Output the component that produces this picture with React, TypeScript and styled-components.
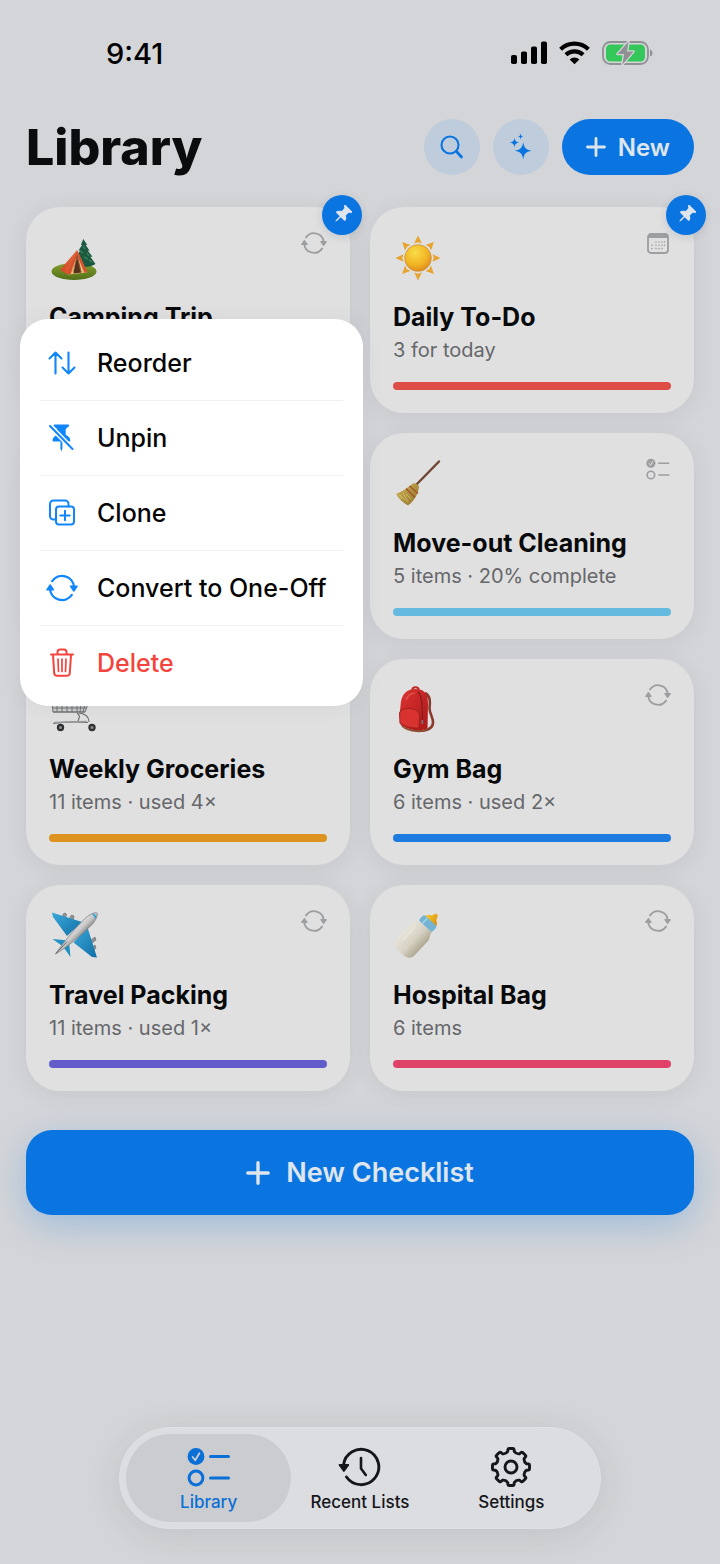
import type { ReactNode } from "react";
import styled, { createGlobalStyle } from "styled-components";

type Kind = "repeat" | "daily" | "checklist";

interface Checklist {
  title: string;
  detail?: string;
  kind: Kind;
  color: string;
  picture: ReactNode;
  pinned?: boolean;
}

/* ---------- icons ---------- */

const RepeatIcon = ({ width = 32, height = 28 }) => (
  <svg width={width} height={height} viewBox="0 0 32 28" fill="none" stroke="currentColor" strokeWidth="2.3" strokeLinecap="round" aria-hidden="true">
    <path d="M6.2 7.1A12 12 0 0 1 28 13" />
    <path d="M4 15a12 12 0 0 0 21.8 5.9" />
    <path d="M24.5 12.2h6.6l-3.3 4.8z" fill="currentColor" strokeWidth="1.5" strokeLinejoin="round" />
    <path d="M.9 15.8h6.6l-3.3-4.8z" fill="currentColor" strokeWidth="1.5" strokeLinejoin="round" />
  </svg>
);

const ChecklistIcon = ({ width = 44, height = 40, tick = "#cdced1" }) => (
  <svg width={width} height={height} viewBox="0 0 44 40" fill="none" stroke="currentColor" strokeWidth="3" strokeLinecap="round" aria-hidden="true">
    <circle cx="9" cy="9.5" r="8.4" fill="currentColor" stroke="none" />
    <path d="M5.6 10l2.6 3.2 4.2-7" stroke={tick} strokeWidth="1.8" strokeLinejoin="round" />
    <circle cx="9" cy="31" r="6.9" />
    <path d="M23.5 9.5h18M23.5 31h18" />
  </svg>
);

const CalendarIcon = () => (
  <svg width="22" height="21" viewBox="0 0 22 21" fill="none" aria-hidden="true">
    <rect x="1" y="1" width="20" height="19" rx="3" stroke="currentColor" strokeWidth="1.8" />
    <path d="M1 5V4a3 3 0 0 1 3-3h14a3 3 0 0 1 3 3v1z" fill="currentColor" />
    <path
      d="M9 9h0M12 9h0M15 9h0M17.5 9h0M5 12.3h0M9 12.3h0M12 12.3h0M15 12.3h0M17.5 12.3h0M5 15.6h0M9 15.6h0M12 15.6h0M15 15.6h0"
      stroke="currentColor"
      strokeWidth="1.6"
      strokeLinecap="round"
    />
  </svg>
);

const pinPath =
  "M5.6 .6h13.6c1 0 1.3 1 .7 1.7l-3.2 2.8v5.6c2.8 1.5 4.6 3.6 4.6 5.5 0 .9-.5 1.3-1.3 1.3h-6.6v7l-1 3-1-3v-7H4.8c-.8 0-1.3-.4-1.3-1.3 0-1.9 1.8-4 4.6-5.5V5.1L4.9 2.3C4.3 1.6 4.6 .6 5.6 .6z";

const PinIcon = () => (
  <svg width="20" height="20" viewBox="0 0 28 28" fill="currentColor" aria-hidden="true">
    <path d={pinPath} transform="rotate(45 14 14) translate(1.6 0)" />
  </svg>
);

const UnpinIcon = () => (
  <svg width="25" height="28" viewBox="0 0 25 28" fill="currentColor" aria-hidden="true">
    <path d={pinPath} />
    <path d="M1 2l22.5 23" stroke="#fff" strokeWidth="5" />
    <path d="M1 2l22.5 23" stroke="currentColor" strokeWidth="2" strokeLinecap="round" />
  </svg>
);

const ReorderIcon = () => (
  <svg width="28" height="24" viewBox="0 0 28 24" fill="none" stroke="currentColor" strokeWidth="2.1" strokeLinecap="round" strokeLinejoin="round" aria-hidden="true">
    <path d="M7.5 22.5V1.5M1.5 7.5l6-6 6 6M20.5 1.5v21M14.5 16.5l6 6 6-6" />
  </svg>
);

const CloneIcon = () => (
  <svg width="28" height="28" viewBox="0 0 28 28" fill="none" stroke="currentColor" strokeWidth="2" strokeLinecap="round" aria-hidden="true">
    <path d="M7.5 20.5h-2A3.5 3.5 0 0 1 2 17V5a3.5 3.5 0 0 1 3.5-3.5H17A3.5 3.5 0 0 1 20.5 5v2.500" />
    <rect x="8" y="7.5" width="18" height="18" rx="3" />
    <path d="M17 11.8v9.4M12.3 16.5h9.4" />
  </svg>
);

const TrashIcon = () => (
  <svg width="26" height="30" viewBox="0 0 26 30" fill="none" stroke="currentColor" strokeWidth="2" strokeLinecap="round" strokeLinejoin="round" aria-hidden="true">
    <path d="M2 6.5h22M8.5 6.5V4A2.5 2.5 0 0 1 11 1.5h4A2.5 2.5 0 0 1 17.5 4v2.5" />
    <path d="M4 7l1.2 18a3 3 0 0 0 3 2.8h9.6a3 3 0 0 0 3-2.8L22 7" />
    <path d="M9 11l.5 12.5M13 11v12.5M17 11l-.5 12.5" strokeWidth="1.7" />
  </svg>
);

const SearchIcon = () => (
  <svg width="24" height="24" viewBox="0 0 24 24" fill="none" stroke="currentColor" strokeLinecap="round" aria-hidden="true">
    <circle cx="10" cy="10" r="8.5" strokeWidth="2.1" />
    <path d="M16.5 16.5l5 5.5" strokeWidth="2.8" />
  </svg>
);

const SparklesIcon = () => (
  <svg width="26" height="28" viewBox="0 0 26 28" fill="currentColor" aria-hidden="true">
    <path d="M15.2 9c.8 5.500 2.500 7.800 8.300 8.800-5.800 1-7.500 3.300-8.300 8.800-.8-5.500-2.500-7.800-8.300-8.800 5.800-1 7.500-3.300 8.300-8.800z" />
    <path d="M6.5 4.700c.5 3.200 1.500 4.200 4.700 4.800-3.200.6-4.200 1.600-4.700 4.800-.5-3.200-1.500-4.200-4.700-4.800 3.200-.6 4.200-1.600 4.700-4.800z" />
    <path d="M12.600 .6c.3 2 .9 2.700 2.900 3-2 .3-2.600 1-2.900 3-.3-2-.9-2.700-2.900-3 2-.3 2.600-1 2.900-3z" />
  </svg>
);

const PlusIcon = ({ size = 20 }) => (
  <svg width={size} height={size} viewBox="0 0 20 20" fill="none" stroke="currentColor" strokeWidth="2.8" strokeLinecap="round" aria-hidden="true">
    <path d="M10 1.5v17M1.5 10h17" />
  </svg>
);

const HistoryIcon = () => (
  <svg width="44" height="40" viewBox="0 0 44 40" fill="none" stroke="currentColor" strokeWidth="2.9" strokeLinecap="round" strokeLinejoin="round" aria-hidden="true">
    <path d="M5.5 18a17.7 17.7 0 1 1 3 12" />
    <path d="M1.5 18h8.8l-4.4 6z" fill="currentColor" strokeWidth="1.8" />
    <path d="M23 11v10.5l4.8 6.5" strokeWidth="2.6" />
  </svg>
);

const gearPath = () => {
  const point = (radius: number, degrees: number) => {
    const angle = ((degrees - 90) * Math.PI) / 180;
    return `${(21 + radius * Math.cos(angle)).toFixed(2)} ${(21 + radius * Math.sin(angle)).toFixed(2)}`;
  };
  let path = "";
  for (let a = 0; a < 360; a += 45) {
    path += `${a ? "L" : "M"}${point(15.8, a - 12)}L${point(17.8, a - 10)}Q${point(18.8, a - 9)} ${point(18.6, a - 5)}`;
    path += `L${point(18.6, a + 5)}Q${point(18.8, a + 9)} ${point(17.8, a + 10)}L${point(15.8, a + 12)}`;
    path += `Q${point(13.6, a + 22.5)} ${point(15.8, a + 33)}`;
  }
  return path + "Z";
};

const GearIcon = () => (
  <svg width="42" height="42" viewBox="0 0 42 42" fill="none" stroke="currentColor" strokeWidth="2.9" strokeLinejoin="round" aria-hidden="true">
    <path d={gearPath()} />
    <circle cx="21" cy="21" r="6" />
  </svg>
);

const SignalIcon = () => (
  <svg width="36" height="24" viewBox="0 0 36 24" aria-hidden="true">
    <rect x="0" y="14" width="6" height="9" rx="1.8" />
    <rect x="10" y="10.5" width="6" height="12.5" rx="1.8" />
    <rect x="20" y="5.5" width="6" height="17.5" rx="1.8" />
    <rect x="30" y="0.5" width="6" height="22.5" rx="1.8" />
  </svg>
);

const WifiIcon = () => (
  <svg width="31" height="24" viewBox="0 0 31 24" fill="none" stroke="#000" strokeWidth="4.1" aria-hidden="true">
    <path d="M1.6 8.2a20 20 0 0 1 27.8 0" />
    <path d="M6.9 13.8a12.4 12.4 0 0 1 17.2 0" />
    <path d="M15.5 23.200l-4.800-4.800a6.800 6.800 0 0 1 9.600 0z" fill="#000" stroke="none" />
  </svg>
);

const BatteryIcon = () => (
  <svg width="51" height="26" viewBox="0 0 51 26" aria-hidden="true">
    <rect x="1" y="2" width="45" height="22" rx="7.5" fill="none" stroke="#909194" strokeWidth="1.8" />
    <rect x="4" y="4.5" width="39" height="17" rx="4.5" fill="#34c759" />
    <path d="M48 9.500c3.300 1 3.300 6 0 7z" fill="#909194" />
    <path d="M26.5 1.5L15.5 14H22L20.5 24.5 31.5 11.5H25z" fill="#909194" stroke="#d4d5d8" strokeWidth="2.6" strokeLinejoin="round" paintOrder="stroke" />
  </svg>
);

/* ---------- card pictures ---------- */

const Tent = () => (
  <svg width="48" height="48" viewBox="0 0 48 48" aria-hidden="true">
    <defs>
      <linearGradient id="grass" x2="0" y2="1"><stop stopColor="#84a02e" /><stop offset="1" stopColor="#526f18" /></linearGradient>
      <linearGradient id="canvas" x2="1"><stop stopColor="#cf4827" /><stop offset="1" stopColor="#e66a3c" /></linearGradient>
    </defs>
    <ellipse cx="25" cy="38.5" rx="22.5" ry="8.500" fill="url(#grass)" />
    <path d="M33 26h3v12h-3z" fill="#5a3a22" />
    <path d="M34.3 6l4 6-1.8-.3 4.2 6-2-.2 4.8 6.3-2.2-.1 5.2 7.3c-6 4-16 4-22 0l4.5-7.5-2.2.2 4.5-6.3-1.8.2 3.8-6-1.5.3z" fill="#1c5a40" />
    <path d="M34 13l2 3M31 18l3 2M38 20l2 3M35 24l4 2M40 27l3 2" stroke="#3e8560" strokeWidth="1.3" />
    <path d="M28 17L11 37l8.5 5z" fill="url(#canvas)" />
    <path d="M28 17l-8.5 24.5 18.5-2z" fill="#eebf7c" />
    <path d="M28 20l-3.5 20.5 8-1z" fill="#55301c" />
    <path d="M28 17l-10 23.500 3.500 1L28 22l7.500 18 3-1z" fill="#d7512e" />
    <path d="M28 24l-4 15M28 24l4 15" stroke="#a16b36" strokeWidth=".7" />
  </svg>
);

const Sun = () => (
  <svg width="48" height="48" viewBox="0 0 48 48" aria-hidden="true">
    <defs>
      <radialGradient id="sun" cx=".4" cy=".3" r=".8"><stop stopColor="#f9dc48" /><stop offset=".55" stopColor="#f2b626" /><stop offset="1" stopColor="#d8831b" /></radialGradient>
    </defs>
    {[0, 45, 90, 135, 180, 225, 270, 315].map((turn) => (
      <path key={turn} d="M25 2.5l3.8 8-3.8-1.3-3.8 1.3z" fill="#e7a32b" transform={`rotate(${turn} 25 25)`} />
    ))}
    <circle cx="25" cy="25" r="13.3" fill="url(#sun)" stroke="#cf8a26" strokeWidth=".7" />
  </svg>
);

const Broom = () => (
  <svg width="48" height="48" viewBox="0 0 48 48" aria-hidden="true">
    <defs>
      <linearGradient id="straw" x2="1" y2="1"><stop stopColor="#d2b459" /><stop offset="1" stopColor="#8d7329" /></linearGradient>
    </defs>
    <path d="M46 2.5L23 26" stroke="#6f4732" strokeWidth="2.5" strokeLinecap="round" />
    <path d="M20 24.5c2-1 4.5 1 6 2.5-.2 5-3 13.500-11 19.500C10 44 6 40 3 35c7-2.500 12-7 17-10.500z" fill="url(#straw)" />
    <path d="M16.5 27l8.5 7.5M13 29.5l9 9" stroke="#a0502c" strokeWidth="1.3" />
    <path d="M7 36l5 5M10 34l5 9M13 35l5 5M5 35l4 5" stroke="#ddc472" strokeWidth=".7" />
  </svg>
);

const Cart = () => (
  <svg width="48" height="48" viewBox="0 0 48 48" fill="none" stroke="#6f7072" strokeWidth="1" aria-hidden="true">
    <path d="M2 8l40 3-6 16H4z" fill="#cbcccd" />
    <path d="M8 9v18M13 9v18M18 9v18M23 10v17M28 10v17M33 11l-2 16M38 11l-4 16M3 13h38M3 18h36M4 23h34M4 27h32" />
    <path d="M4 38.5c12-2 23-2 35-1M28 28c4 3 2 5 1 8M30 28c8 1 10 5 10 9" strokeWidth="1.2" />
    <path d="M5 37.5l33-1" stroke="#9a9b9d" strokeWidth="1.5" />
    <circle cx="11.5" cy="42.5" r="2.6" fill="#8d8e90" stroke="#2f3032" strokeWidth="2.2" />
    <circle cx="43" cy="42.5" r="2.6" fill="#8d8e90" stroke="#2f3032" strokeWidth="2.2" />
  </svg>
);

const Backpack = () => (
  <svg width="48" height="48" viewBox="0 0 48 48" aria-hidden="true">
    <defs>
      <linearGradient id="pack" x2="1" y2="1"><stop stopColor="#dc3431" /><stop offset="1" stopColor="#ad1719" /></linearGradient>
    </defs>
    <path d="M32 8c6 3 5 10 4.5 15-.3 5 4 10 3.5 15-.5 5-5 7-9 7" fill="none" stroke="#8b3a2c" strokeWidth="2.6" />
    <path d="M19 6c0-5 7-5 7 0" fill="none" stroke="#c22b29" strokeWidth="2" />
    <path d="M7.5 21C8 9 14 4 22 4s13 3 13 15l-.5 24c-4 3.500-16 4-26-2.500-2-2-2-13-1-19.500z" fill="url(#pack)" />
    <path d="M8 40c7 5 18 6.500 26.500 3.500L34 46c-7 2.500-19 1-25-4z" fill="#8e4b30" />
    <path d="M6.5 28c1-6 18-6.500 20 1l-.5 14c-6 .5-14-1-19-4.500z" fill="#d83330" stroke="#9a1d1c" strokeWidth=".9" />
    <path d="M25 7c4 4 4.5 12 4.3 29" fill="none" stroke="#7f1e20" strokeWidth="1.2" />
    <path d="M29.3 35v4" stroke="#777" strokeWidth="1.6" />
    <path d="M13 15c2-5 5-7 9-7" fill="none" stroke="#e65b54" strokeWidth="1.2" />
  </svg>
);

const Plane = () => (
  <svg width="50" height="48" viewBox="0 0 50 48" aria-hidden="true">
    <defs>
      <linearGradient id="wing" x2="1" y2="1"><stop stopColor="#3ba9da" /><stop offset="1" stopColor="#116ea5" /></linearGradient>
      <linearGradient id="hull" x1=".35" y1=".35" x2=".6" y2=".6"><stop stopColor="#e9e9e9" /><stop offset=".6" stopColor="#c8c8c8" /><stop offset="1" stopColor="#858585" /></linearGradient>
    </defs>
    <path d="M13 6l2-4 2.5 1-1 5zM20 8l2.5-4 2.5 1-1 5zM42 29l4-3 1 3-4 3zM42 37l4-3 1 3-3 3z" fill="#8f9193" stroke="#66686a" strokeWidth=".6" />
    <path d="M3 1.5L33 11 18 25 4 6z" fill="url(#wing)" />
    <path d="M48 46.5L38.5 16.5 24.5 31.5 43 46z" fill="url(#wing)" />
    <path d="M3.5 28l16 1.5-5.5 6zM21.5 46l-1.5-16-6 5.5z" fill="#2390c4" />
    <path d="M6.5 43C12 34 29 14 36.500 7c5-4.500 10-6 11.500-5 1 1.500-.5 6.500-5 11.500C36 21 16 38 6.500 43z" fill="url(#hull)" stroke="#77797b" strokeWidth=".7" />
    <path d="M43.5 3.2c2 .5 3 2 3 4" fill="none" stroke="#3aa3d2" strokeWidth="1.8" />
    <path d="M7 42.5l11-12" stroke="#66686a" strokeWidth="1" />
  </svg>
);

const Bottle = () => (
  <svg width="48" height="48" viewBox="0 0 48 48" aria-hidden="true">
    <defs>
      <linearGradient id="milk" x2="1"><stop stopColor="#e6e3d8" /><stop offset=".55" stopColor="#d6d1c2" /><stop offset="1" stopColor="#aea892" /></linearGradient>
      <linearGradient id="teat" x2="1"><stop stopColor="#f7c72b" /><stop offset="1" stopColor="#d68c11" /></linearGradient>
    </defs>
    <g transform="translate(26 22) rotate(43)">
      <path d="M-7-16c0-4 4-4 5-7 .5-4 4.5-4 5 0 1 3 5 3 5 7z" fill="url(#teat)" />
      <rect x="-9" y="-17" width="18" height="8" rx="2" fill="#74b4d2" />
      <path d="M-4-17v8" stroke="#a3d3e6" strokeWidth="1.5" />
      <path d="M-9-9H9c0 4 3 5 3 9v19c0 6-4 8-12 8s-12-2-12-8V0c0-4 3-5 3-9z" fill="url(#milk)" />
      <path d="M-7-1v17" stroke="#f0eee6" strokeWidth="2" strokeLinecap="round" opacity=".5" />
    </g>
  </svg>
);

const kindIcons: Record<Kind, ReactNode> = {
  repeat: <RepeatIcon width={26} height={24} />,
  daily: <CalendarIcon />,
  checklist: <ChecklistIcon width={24} height={22} tick="#e0e0e1" />,
};

const checklists: (Checklist | null)[] = [
  { title: "Camping Trip", kind: "repeat", color: "#39ae57", picture: <Tent />, pinned: true },
  { title: "Daily To-Do", detail: "3 for today", kind: "daily", color: "#df4e46", picture: <Sun />, pinned: true },
  null,
  { title: "Move-out Cleaning", detail: "5 items · 20% complete", kind: "checklist", color: "#64bbdf", picture: <Broom /> },
  { title: "Weekly Groceries", detail: "11 items · used 4×", kind: "repeat", color: "#dd931f", picture: <Cart /> },
  { title: "Gym Bag", detail: "6 items · used 2×", kind: "repeat", color: "#1e7ce0", picture: <Backpack /> },
  { title: "Travel Packing", detail: "11 items · used 1×", kind: "repeat", color: "#625ccb", picture: <Plane /> },
  { title: "Hospital Bag", detail: "6 items", kind: "repeat", color: "#df4167", picture: <Bottle /> },
];

const actions = [
  { label: "Reorder", icon: <ReorderIcon /> },
  { label: "Unpin", icon: <UnpinIcon /> },
  { label: "Clone", icon: <CloneIcon /> },
  { label: "Convert to One-Off", icon: <RepeatIcon /> },
  { label: "Delete", icon: <TrashIcon />, danger: true },
];

const tabs = [
  { label: "Library", icon: <ChecklistIcon /> },
  { label: "Recent Lists", icon: <HistoryIcon /> },
  { label: "Settings", icon: <GearIcon /> },
];

function App() {
  return (
    <>
      <GlobalStyle />
      <Screen>
        <StatusBar>
          <Time>9:41</Time>
          <StatusIcons>
            <SignalIcon />
            <WifiIcon />
            <BatteryIcon />
          </StatusIcons>
        </StatusBar>
        <Header>
          <Title>Library</Title>
          <RoundButton aria-label="Search"><SearchIcon /></RoundButton>
          <RoundButton aria-label="Suggestions"><SparklesIcon /></RoundButton>
          <NewButton><PlusIcon />New</NewButton>
        </Header>
        <Main>
          <CardGrid>
            {checklists.map((list, index) =>
              list ? (
                <Card key={list.title}>
                  <CardTop>
                    <Picture>{list.picture}</Picture>
                    <KindIcon>{kindIcons[list.kind]}</KindIcon>
                  </CardTop>
                  <CardTitle>{list.title}</CardTitle>
                  <CardDetail>{list.detail}</CardDetail>
                  <Bar $color={list.color} />
                  {list.pinned && <PinBadge><PinIcon /></PinBadge>}
                  {index === 0 && (
                    <Menu>
                      {actions.map((action) => (
                        <MenuItem key={action.label} $danger={action.danger}>
                          <MenuIcon $danger={action.danger}>{action.icon}</MenuIcon>
                          {action.label}
                        </MenuItem>
                      ))}
                    </Menu>
                  )}
                </Card>
              ) : (
                <Card key={index} />
              )
            )}
          </CardGrid>
          <CreateButton><PlusIcon size={24} />New Checklist</CreateButton>
        </Main>
        <TabBar>
          {tabs.map((tab, index) => (
            <Tab key={tab.label} href="#" $active={index === 0}>
              <TabIcon>{tab.icon}</TabIcon>
              {tab.label}
            </Tab>
          ))}
        </TabBar>
      </Screen>
    </>
  );
}

export default App;

const GlobalStyle = createGlobalStyle`
  * {
    box-sizing: border-box;
  }

  body {
    margin: 0;
    background: #d4d5d8;
    font-family: Inter, "Liberation Sans", sans-serif;
  }

  button {
    border: 0;
    padding: 0;
    font-family: inherit;
  }

  svg {
    display: block;
    flex-shrink: 0;
  }
`

const Screen = styled.div`
  display: flex;
  flex-direction: column;
  min-height: 100vh;
  padding-bottom: 35px;
`

const StatusBar = styled.div`
  display: flex;
  align-items: center;
  justify-content: space-between;
  height: 106px;
  padding: 0 67px 0 106px;
`

const Time = styled.span`
  font-size: 29px;
  font-weight: 500;
`

const StatusIcons = styled.div`
  display: flex;
  align-items: center;
  gap: 12px;
`

const Header = styled.header`
  display: flex;
  align-items: center;
  gap: 13px;
  padding: 12px 26px 31px;
`

const Title = styled.h1`
  flex: 1;
  margin: 0;
  color: #0b0c0e;
  font-size: 50px;
  font-weight: 800;
  line-height: 58px;
`

const RoundButton = styled.button`
  display: flex;
  align-items: center;
  justify-content: center;
  width: 56px;
  height: 56px;
  border-radius: 50%;
  background: #bfccdb;
  color: #0a75e1;
`

const NewButton = styled.button`
  display: flex;
  align-items: center;
  gap: 12px;
  height: 56px;
  padding: 0 24px;
  border-radius: 28px;
  background: #0a75e1;
  color: #dfe5ec;
  font-size: 24px;
  font-weight: 600;
`

const Main = styled.main`
  padding: 0 26px;
`

const CardGrid = styled.div`
  display: grid;
  grid-template-columns: 1fr 1fr;
  gap: 20px;
`

const Card = styled.article`
  position: relative;
  min-width: 0;
  height: 206px;
  padding: 23px;
  border-radius: 34px;
  background: #e0e0e1;
  box-shadow: 0 4px 22px rgba(60, 70, 85, 0.09);
`

const CardTop = styled.div`
  display: flex;
  justify-content: space-between;
  height: 51px;
  margin-bottom: 18px;
`

const Picture = styled.div`
  align-self: flex-end;
`

const KindIcon = styled.div`
  display: flex;
  align-items: center;
  justify-content: center;
  width: 26px;
  height: 26px;
  color: #9d9ea0;
`

const CardTitle = styled.h2`
  margin: 0;
  color: #08090a;
  font-size: 25px;
  font-weight: 700;
  line-height: 36px;
  white-space: nowrap;
`

const CardDetail = styled.p`
  height: 30px;
  margin: 0 0 17px;
  color: #66676a;
  font-size: 20px;
  line-height: 30px;
  white-space: nowrap;
`

const Bar = styled.div<{ $color: string }>`
  height: 8px;
  border-radius: 4px;
  background: ${({ $color }) => $color};
`

const PinBadge = styled.span`
  position: absolute;
  top: -12px;
  right: -12px;
  display: flex;
  align-items: center;
  justify-content: center;
  width: 40px;
  height: 40px;
  border-radius: 50%;
  background: #0a75e1;
  color: #dfe5ec;
  box-shadow: 0 2px 8px rgba(40, 60, 90, 0.16);
`

const Menu = styled.div`
  position: absolute;
  z-index: 1;
  top: 112px;
  left: -6px;
  width: 343px;
  padding: 6px 20px;
  border-radius: 28px;
  background: #fff;
  box-shadow: 0 0 24px rgba(60, 70, 85, 0.06);
`

const MenuItem = styled.button<{ $danger?: boolean }>`
  display: flex;
  align-items: center;
  gap: 14px;
  width: 100%;
  height: 75px;
  background: none;
  color: ${({ $danger }) => ($danger ? "#f4443b" : "#050505")};
  font-size: 25px;
  font-weight: 500;
  white-space: nowrap;

  & + & {
    border-top: 1px solid #f1f1f2;
  }
`

const MenuIcon = styled.span<{ $danger?: boolean }>`
  display: flex;
  justify-content: center;
  width: 43px;
  color: ${({ $danger }) => ($danger ? "#f4443b" : "#1186fb")};
`

const CreateButton = styled.button`
  display: flex;
  align-items: center;
  justify-content: center;
  gap: 16px;
  width: 100%;
  height: 85px;
  margin-top: 39px;
  border-radius: 26px;
  background: #0a75e1;
  color: #dfe5ec;
  font-size: 27px;
  font-weight: 600;
  box-shadow: 0 10px 36px rgba(10, 117, 225, 0.27);
`

const TabBar = styled.nav`
  display: grid;
  grid-template-columns: repeat(3, 1fr);
  width: 482px;
  max-width: calc(100% - 52px);
  margin: auto auto 0;
  padding: 6px 13px;
  border: 1px solid #e0e1e4;
  border-radius: 51px;
  background: #dcdde1;
  box-shadow: 0 6px 36px rgba(40, 45, 55, 0.11);
`

const Tab = styled.a<{ $active: boolean }>`
  display: flex;
  flex-direction: column;
  align-items: center;
  height: 88px;
  margin: 0 -7px;
  padding-top: 12px;
  border-radius: 44px;
  background: ${({ $active }) => ($active ? "#cbccd0" : "none")};
  color: ${({ $active }) => ($active ? "#0a6fd6" : "#15161a")};
  font-size: 17px;
  font-weight: 500;
  line-height: 24px;
  text-decoration: none;
  white-space: nowrap;
`

const TabIcon = styled.span`
  display: flex;
  align-items: center;
  height: 42px;
  margin-bottom: 2px;
`
